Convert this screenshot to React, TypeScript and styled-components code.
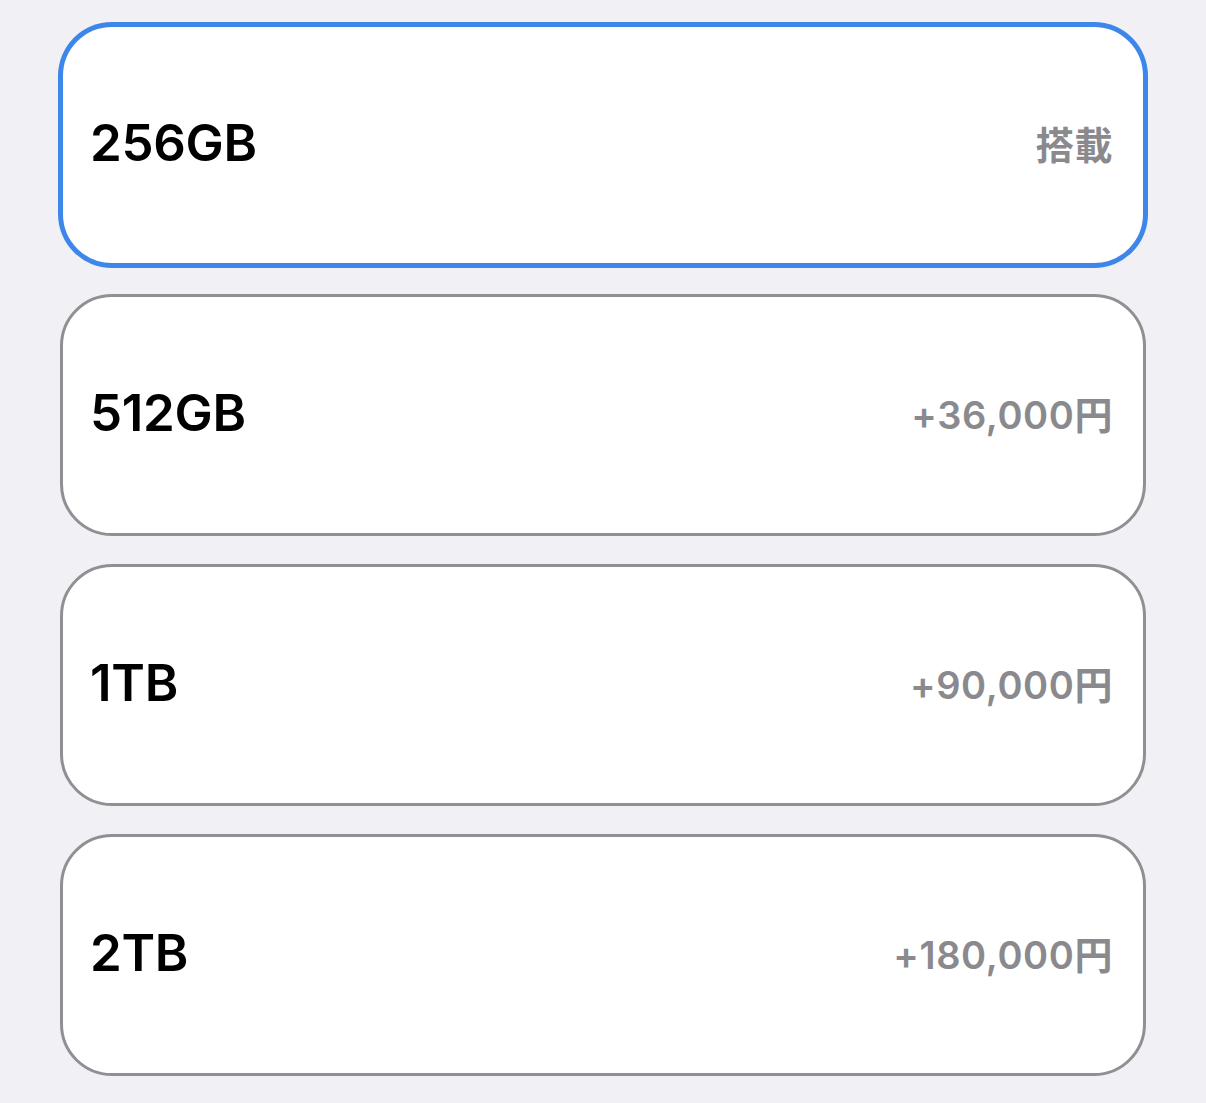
import { useState } from 'react';
import styled, { createGlobalStyle } from 'styled-components';

const GlobalStyle = createGlobalStyle`
  html, body {
    margin: 0;
    padding: 0;
    background: #f0f0f5;
    font-family: Inter, "Noto Sans CJK JP", sans-serif;
  }
`;

const List = styled.div`
  display: flex;
  flex-direction: column;
  gap: 28px;
  padding: 24px 60px 0 60px;
  width: 1086px;
`;

const Card = styled.button<{ $selected: boolean }>`
  display: flex;
  align-items: center;
  justify-content: space-between;
  box-sizing: border-box;
  height: 242px;
  width: 100%;
  padding: 0 30px 5px 27px;
  background: #ffffff;
  border-radius: 52px;
  border: 3px solid ${(p) => (p.$selected ? '#3d86ea' : '#909094')};
  box-shadow: ${(p) => (p.$selected ? '0 0 0 2px #3d86ea' : 'none')};
  cursor: pointer;
  font-family: inherit;
  text-align: left;
`;

const Capacity = styled.span`
  font-size: 51px;
  font-weight: 600;
  color: #000;
  letter-spacing: -0.3px;
`;

const Price = styled.span`
  font-size: 38px;
  font-weight: 600;
  color: #8a8a8e;
  letter-spacing: 0.6px;
`;

const options = [
  { size: '256GB', price: '搭載' },
  { size: '512GB', price: '+36,000円' },
  { size: '1TB', price: '+90,000円' },
  { size: '2TB', price: '+180,000円' },
];

export default function App() {
  const [selected, setSelected] = useState(0);

  return (
    <>
      <GlobalStyle />
      <List>
        {options.map((o, i) => (
          <Card key={o.size} $selected={selected === i} onClick={() => setSelected(i)}>
            <Capacity>{o.size}</Capacity>
            <Price>{o.price}</Price>
          </Card>
        ))}
      </List>
    </>
  );
}
